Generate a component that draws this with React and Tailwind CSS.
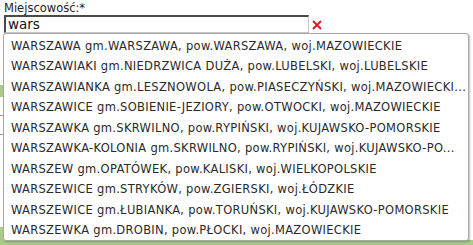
import React from "react";

const items = [
  "WARSZAWA gm.WARSZAWA, pow.WARSZAWA, woj.MAZOWIECKIE",
  "WARSZAWIAKI gm.NIEDRZWICA DUŻA, pow.LUBELSKI, woj.LUBELSKIE",
  "WARSZAWIANKA gm.LESZNOWOLA, pow.PIASECZYŃSKI, woj.MAZOWIECKI...",
  "WARSZAWICE gm.SOBIENIE-JEZIORY, pow.OTWOCKI, woj.MAZOWIECKIE",
  "WARSZAWKA gm.SKRWILNO, pow.RYPIŃSKI, woj.KUJAWSKO-POMORSKIE",
  "WARSZAWKA-KOLONIA gm.SKRWILNO, pow.RYPIŃSKI, woj.KUJAWSKO-PO...",
  "WARSZEW gm.OPATÓWEK, pow.KALISKI, woj.WIELKOPOLSKIE",
  "WARSZEWICE gm.STRYKÓW, pow.ZGIERSKI, woj.ŁÓDZKIE",
  "WARSZEWICE gm.ŁUBIANKA, pow.TORUŃSKI, woj.KUJAWSKO-POMORSKIE",
  "WARSZEWKA gm.DROBIN, pow.PŁOCKI, woj.MAZOWIECKIE",
];

export default function App() {
  return (
    <div
      className="relative w-[473px] h-[245px] bg-white overflow-hidden text-[#222] flex flex-col"
      style={{ fontFamily: '"DejaVu Sans", Verdana, sans-serif' }}
    >
      <div className="pl-[4px] pt-[2px]">
        <div className="text-[11.5px] leading-[13px] text-[#222]">Miejscowość:*</div>
        <div className="flex items-center gap-[3px]">
          <div className="w-[305px] h-[18px] border-t-2 border-l-2 border-r border-b border-t-[#4a4a4a] border-l-[#4a4a4a] border-r-[#c8c8c8] border-b-[#c8c8c8] flex items-center pl-[2px] text-[13.5px] text-[#111]">
            wars
          </div>
          <svg width="10" height="10" viewBox="0 0 10 10" className="mt-[2px]">
            <path d="M1 1 L9 9 M9 1 L1 9" stroke="#e0141e" strokeWidth="1.8" />
          </svg>
        </div>
      </div>

      {/* underlying page content, covered by the suggestion list */}
      <div className="relative flex-1 flex flex-col">
        <div className="flex-1 flex flex-col pt-[52px] gap-[18px]">
          <div className="w-[4px] h-[12px] bg-[#a9cc88]" />
          <div className="w-[4px] h-[1px] bg-[#999]" />
          <div className="w-[4px] h-[1px] bg-[#999]" />
        </div>
        <div className="flex">
          <div className="w-[4px] h-[13px] bg-[#a9cc88]" />
        </div>
        <div className="h-[5px] bg-[#a9cc88]" />

        <div className="absolute left-[3px] top-0 w-[466px] h-[208px] bg-white border border-[#a8a8a8] rounded-[3px] shadow-[1px_1px_2px_rgba(0,0,0,0.25)] pt-[2px] overflow-hidden">
          {items.map((t, i) => (
            <div
              key={i}
              className="h-[20.5px] flex items-center pl-[7px] text-[11.5px] tracking-[0.3px] text-[#2a2a2a] whitespace-nowrap"
            >
              {t}
            </div>
          ))}
        </div>
      </div>
    </div>
  );
}
